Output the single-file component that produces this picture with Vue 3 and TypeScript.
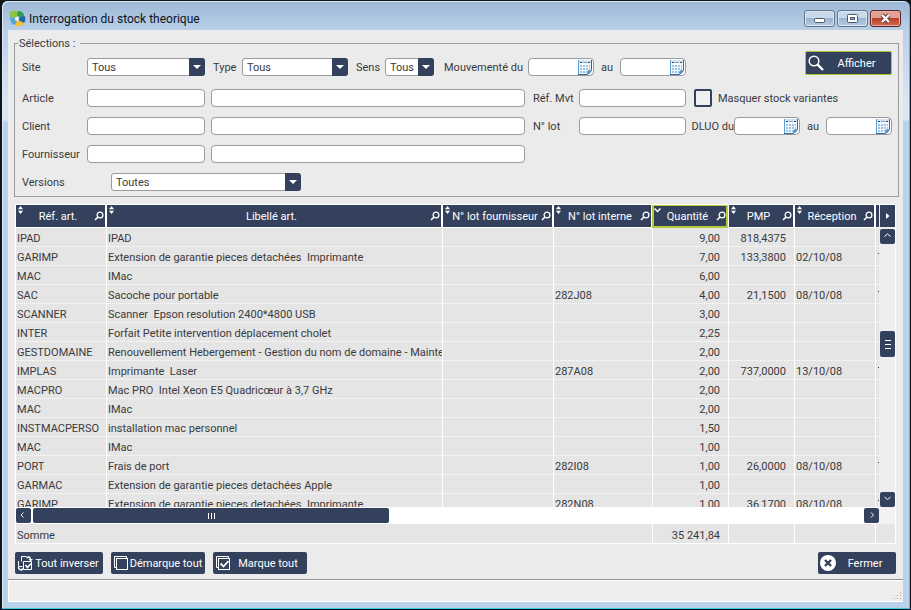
<script setup lang="ts">
import { ref } from 'vue'

interface Column {
  key: string
  label: string
  width: string
  sorted?: boolean
}

interface StockRow {
  ref: string
  label: string
  lot: string
  qty: string
  pmp: string
  date: string
}

const columns: Column[] = [
  { key: 'ref', label: 'Réf. art.', width: '91px' },
  { key: 'label', label: 'Libellé art.', width: 'auto' },
  { key: 'supplierLot', label: 'N° lot fournisseur', width: '111px' },
  { key: 'lot', label: 'N° lot interne', width: '99px' },
  { key: 'qty', label: 'Quantité', width: '76px', sorted: true },
  { key: 'pmp', label: 'PMP', width: '66px' },
  { key: 'date', label: 'Réception', width: '81px' },
]

const row = (ref: string, label: string, qty: string, lot = '', pmp = '', date = ''): StockRow => ({
  ref, label, lot, qty, pmp, date,
})

const rows: StockRow[] = [
  row('IPAD', 'IPAD', '9,00', '', '818,4375'),
  row('GARIMP', 'Extension de garantie pieces detachées  Imprimante', '7,00', '', '133,3800', '02/10/08'),
  row('MAC', 'IMac', '6,00'),
  row('SAC', 'Sacoche pour portable', '4,00', '282J08', '21,1500', '08/10/08'),
  row('SCANNER', 'Scanner  Epson resolution 2400*4800 USB', '3,00'),
  row('INTER', 'Forfait Petite intervention déplacement cholet', '2,25'),
  row('GESTDOMAINE', 'Renouvellement Hebergement - Gestion du nom de domaine - Mainten', '2,00'),
  row('IMPLAS', 'Imprimante  Laser', '2,00', '287A08', '737,0000', '13/10/08'),
  row('MACPRO', 'Mac PRO  Intel Xeon E5 Quadricœur à 3,7 GHz', '2,00'),
  row('MAC', 'IMac', '2,00'),
  row('INSTMACPERSO', 'installation mac personnel', '1,50'),
  row('MAC', 'IMac', '1,00'),
  row('PORT', 'Frais de port', '1,00', '282I08', '26,0000', '08/10/08'),
  row('GARMAC', 'Extension de garantie pieces detachées Apple', '1,00'),
  row('GARIMP', 'Extension de garantie pieces detachées  Imprimante', '1,00', '282N08', '36,1700', '08/10/08'),
]

const hideVariants = ref(false)
</script>

<template>
  <div class="window">
    <header class="titlebar">
      <svg class="app-icon" viewBox="0 0 17 17" aria-hidden="true">
        <path d="M1 2 Q5 0 9 1 L9 6 L5 8 L1 7 Q0 4 1 2Z" fill="#8cc63e" />
        <path d="M9 1 Q14 1 15 5 L15 8 L10 7 L8 5Z" fill="#2f9e58" />
        <path d="M11 7 L16 6 Q17 11 15 13 L10 13 L9 10Z" fill="#2467a8" />
        <path d="M9 10 L15 13 Q13 17 6 16 L6 12Z" fill="#f4c430" />
        <path d="M1 7 L6 8 L8 11 L6 15 Q1 14 1 7Z" fill="#5ba4d9" />
        <circle cx="8" cy="9" r="2" fill="#eef5fa" />
      </svg>
      <h1>Interrogation du stock theorique</h1>
      <div class="win-buttons">
        <button type="button" aria-label="Réduire">
          <svg viewBox="0 0 13 11"><rect x="1.500" y="5.500" width="10" height="4" rx="1" fill="#fff" stroke="#4b5868" /></svg>
        </button>
        <button type="button" aria-label="Agrandir">
          <svg viewBox="0 0 13 11"><rect x="1.500" y="1.500" width="10" height="8" rx="1" fill="#fff" stroke="#4b5868" /><rect x="4.500" y="4.500" width="4" height="2" fill="#9db8d3" stroke="#4b5868" /></svg>
        </button>
        <button type="button" class="close" aria-label="Fermer la fenêtre">
          <svg viewBox="0 0 13 11"><path d="M3 2l7 7M10 2l-7 7" stroke="#5a3a3c" stroke-width="4.200" /><path d="M3 2l7 7M10 2l-7 7" stroke="#fff" stroke-width="2.400" /></svg>
        </button>
      </div>
    </header>

    <main class="content">
      <fieldset class="selections">
        <legend>Sélections :</legend>
        <div class="top-line">
          <label class="field-label" for="site">Site</label>
          <span class="combo combo-site"><select id="site"><option>Tous</option></select></span>
          <label class="type-label" for="type">Type</label>
          <span class="combo combo-type"><select id="type"><option>Tous</option></select></span>
          <label class="sens-label" for="sens">Sens</label>
          <span class="combo combo-sens"><select id="sens"><option>Tous</option></select></span>
          <label class="moved-label" for="moved-from">Mouvementé du</label>
          <span class="date"><input id="moved-from" type="text" /><button type="button" aria-label="Calendrier"><svg viewBox="0 0 14 16"><use href="#calendar" /></svg></button></span>
          <label class="to" for="moved-to">au</label>
          <span class="date"><input id="moved-to" type="text" /><button type="button" aria-label="Calendrier"><svg viewBox="0 0 14 16"><use href="#calendar" /></svg></button></span>
          <button type="button" class="action show">
            <svg viewBox="0 0 16 16"><circle cx="6" cy="6" r="4.800" fill="none" stroke="#fff" stroke-width="1.500" /><path d="M9.500 9.500L15 15" stroke="#fff" stroke-width="2.400" /></svg>
            <span>Afficher</span>
          </button>
        </div>

        <div class="criteria">
          <label for="article">Article</label>
          <input id="article" type="text" />
          <input type="text" aria-label="Libellé article" />
          <label class="mid" for="mvt">Réf. Mvt</label>
          <input id="mvt" type="text" />
          <div class="check">
            <input id="hide-variants" v-model="hideVariants" type="checkbox" />
            <label for="hide-variants">Masquer stock variantes</label>
          </div>

          <label for="client">Client</label>
          <input id="client" type="text" />
          <input type="text" aria-label="Nom du client" />
          <label class="mid" for="lot">N° lot</label>
          <input id="lot" type="text" />
          <div class="dluo">
            <label for="dluo-from">DLUO du</label>
            <span class="date"><input id="dluo-from" type="text" /><button type="button" aria-label="Calendrier"><svg viewBox="0 0 14 16"><use href="#calendar" /></svg></button></span>
            <label class="to" for="dluo-to">au</label>
            <span class="date"><input id="dluo-to" type="text" /><button type="button" aria-label="Calendrier"><svg viewBox="0 0 14 16"><use href="#calendar" /></svg></button></span>
          </div>

          <label for="supplier">Fournisseur</label>
          <input id="supplier" type="text" />
          <input type="text" aria-label="Nom du fournisseur" />

          <label class="versions-label" for="versions">Versions</label>
          <span class="combo combo-versions"><select id="versions"><option>Toutes</option></select></span>
        </div>
      </fieldset>

      <section class="grid">
        <div class="grid-view">
          <div class="grid-clip">
            <table>
              <colgroup>
                <col v-for="c in columns" :key="c.key" :style="{ width: c.width }" />
                <col class="sliver" />
              </colgroup>
              <thead>
                <tr>
                  <th v-for="c in columns" :key="c.key" :class="{ sorted: c.sorted }">
                    <button type="button" class="head">
                      <svg v-if="c.sorted" class="sort" viewBox="0 0 7 8"><path d="M0.500 2.500l3 3 3-3" fill="none" stroke="#fff" stroke-width="1.500" /></svg>
                      <svg v-else class="sort" viewBox="0 0 7 8"><path d="M1 3.200L3.500 0 6 3.200zM1 4.800L3.500 8 6 4.800z" fill="#fff" /></svg>
                      <span>{{ c.label }}</span>
                      <svg class="loupe" viewBox="0 0 10 10"><circle cx="6" cy="4" r="2.900" fill="none" stroke="#fff" stroke-width="1.300" /><path d="M4 6L1 9" stroke="#fff" stroke-width="1.600" /></svg>
                    </button>
                  </th>
                  <th class="cut"></th>
                </tr>
              </thead>
              <tbody>
                <tr v-for="(r, i) in rows" :key="i">
                  <td>{{ r.ref }}</td>
                  <td>{{ r.label }}</td>
                  <td></td>
                  <td>{{ r.lot }}</td>
                  <td class="num">{{ r.qty }}</td>
                  <td class="num">{{ r.pmp }}</td>
                  <td>{{ r.date }}</td>
                  <td class="cut" :class="{ more: r.date }"></td>
                </tr>
              </tbody>
            </table>
          </div>
          <div class="side">
            <button type="button" class="next-col" aria-label="Colonnes suivantes"><svg viewBox="0 0 15 22"><path d="M6 8v6l3.500-3z" fill="#fff" /></svg></button>
            <button type="button" class="sb" aria-label="Haut"><svg viewBox="0 0 15 15"><path d="M4.500 7.500l3-2.500 3 2.500" /></svg></button>
            <div class="v-track">
              <div class="v-thumb"><i></i><i></i><i></i></div>
            </div>
            <button type="button" class="sb" aria-label="Bas"><svg viewBox="0 0 15 15"><path d="M4.500 5l3 2.500 3-2.500" /></svg></button>
          </div>
        </div>

        <div class="h-scroll">
          <div class="h-track">
            <button type="button" class="sb" aria-label="Gauche"><svg viewBox="0 0 15 15"><path d="M7.500 4.500l-2.500 2.500 2.500 2.500" /></svg></button>
            <div class="h-lane"><div class="h-thumb"><i></i><i></i><i></i></div></div>
            <button type="button" class="sb" aria-label="Droite"><svg viewBox="0 0 15 15"><path d="M7 4.500l2.500 2.500-2.500 2.500" /></svg></button>
          </div>
        </div>

        <table class="totals">
          <colgroup>
            <col v-for="c in columns" :key="c.key" :style="{ width: c.width }" />
            <col class="rest" />
          </colgroup>
          <tbody>
            <tr>
              <td colspan="4">Somme</td>
              <td class="num">35 241,84</td>
              <td></td>
              <td></td>
              <td></td>
            </tr>
          </tbody>
        </table>
      </section>

      <div class="actions">
        <button type="button" class="action invert">
          <svg viewBox="0 0 16 16" fill="none" stroke="#fff"><path d="M4.500 6.500v-5h5M1.500 6v5.500h4M6.500 6.500h8v8h-8z" /><path d="M8.500 10l2 2.500 3.500-4" stroke-width="1.600" /><path d="M9.500 3c2.500-2 4-1 4 2M1.500 12c0 2.500 1.500 3 3.500 3" stroke-width="1.400" /><path d="M11.500 4h4.500l-2.500 2.500zM4.500 12.500v3.500l2-1.500z" fill="#fff" stroke="none" /></svg>
          <span>Tout inverser</span>
        </button>
        <button type="button" class="action wide">
          <svg viewBox="0 0 16 16" fill="none" stroke="#fff"><path d="M1.500 12.500v-11h12M1.500 12.500h2M13.500 1.500v2" /><rect x="3.500" y="3.500" width="11" height="11" /></svg>
          <span>Démarque tout</span>
        </button>
        <button type="button" class="action wide">
          <svg viewBox="0 0 16 16" fill="none" stroke="#fff"><path d="M1.500 12.500v-11h12M1.500 12.500h2M13.500 1.500v2" /><rect x="3.500" y="3.500" width="11" height="11" /><path d="M5.500 8.500l3 3 5-5.500" stroke-width="1.800" /></svg>
          <span>Marque tout</span>
        </button>
        <button type="button" class="action exit">
          <svg viewBox="0 0 16 16"><circle cx="8" cy="8" r="8" fill="#fff" /><path d="M5 5l6 6M11 5l-6 6" stroke="#33415c" stroke-width="2.400" /></svg>
          <span>Fermer</span>
        </button>
      </div>

      <footer class="status">
        <svg viewBox="0 0 8 8" fill="#a9a9a9"><path d="M6 0h1v1h-1zM3 3h1v1h-1zM6 3h1v1h-1zM0 6h1v1h-1zM3 6h1v1h-1zM6 6h1v1h-1z" /></svg>
      </footer>
    </main>

    <svg class="defs" aria-hidden="true">
      <symbol id="calendar" viewBox="0 0 14 16">
        <path d="M0 1h14v10q0 4-5 5h-9z" fill="#f4f9fd" />
        <path d="M0 1h14v3h-14z" fill="#d3e3f1" />
        <path d="M0.500 1v14.500" stroke="#5f9fd4" fill="none" />
        <path d="M2 3h2v1h-2zM10 3h2v1h-2z" fill="#27415e" />
        <path d="M5 3h4v1h-4z" fill="#86a5c2" />
        <path d="M2 6h2v2h-2zM5 6h2v2h-2zM8 6h2v2h-2zM11 6h1v2h-1zM2 9h2v2h-2zM5 9h2v2h-2zM8 9h2v2h-2zM11 9h1v2h-1zM2 12h2v2h-2zM5 12h2v2h-2zM8 12h1v2h-1z" fill="#9cc4e6" />
        <path d="M13.500 1v10q-1 3.500-4.500 4.500h-9" stroke="#2f6ba3" fill="none" />
        <path d="M13 11q-3 0-3.500 1t-.5 3q3-1 4-4z" fill="#5b8fbf" />
      </symbol>
    </svg>
  </div>
</template>

<style>
body {
  background: #10161d;
}
</style>

<style scoped>
.window {
  --navy: #33415c;
  --line: #9a9a9f;
  box-sizing: border-box;
  display: flex;
  flex-direction: column;
  height: 100vh;
  min-height: 400px;
  padding: 0 7px 7px 6px;
  border: 1px solid #10161d;
  border-left-width: 2px;
  border-radius: 7px 7px 0 0;
  background: linear-gradient(#9db8d6, #bad0e9 30px, #d8e6f7 100px, #d8e6f7 119px, #b9d1e9 121px);
  box-shadow: inset -1px -1px #3fc4e0, inset 1px 1px #dfeaf5;
  font-family: Roboto, "Noto Sans", sans-serif;
  font-size: 11px;
  line-height: 14px;
  color: #3a3a3c;
}
.window * {
  box-sizing: border-box;
}
button,
input,
select {
  margin: 0;
  padding: 0;
  border: 0;
  font: inherit;
  color: inherit;
}
svg {
  display: block;
}
label {
  padding-top: 2px;
  white-space: nowrap;
}
.defs {
  position: absolute;
  width: 0;
  height: 0;
}

.titlebar {
  display: flex;
  align-items: center;
  height: 29px;
  padding: 6px 2px 0 0;
  flex: none;
}
.app-icon {
  width: 17px;
  height: 17px;
  margin: 0 3px 0 1px;
}
h1 {
  flex: 1;
  margin: 0;
  font-size: 12px;
  font-weight: normal;
  line-height: 16px;
  color: #0c1420;
}
.win-buttons {
  display: flex;
  gap: 2px;
}
.win-buttons button {
  display: grid;
  place-items: center;
  width: 31px;
  height: 17px;
  border: 1px solid #62758c;
  border-radius: 3px;
  background: linear-gradient(#c6d8ea 45%, #9bb5d0 50%, #b5cce3);
  box-shadow: inset 0 0 0 1px #dbe8f4;
}
.win-buttons svg {
  width: 13px;
  height: 11px;
}
.win-buttons .close {
  border-color: #5d2225;
  background: linear-gradient(#dfa194 45%, #bd3f2b 50%, #cf6a4f);
  box-shadow: inset 0 0 0 1px #e5b0a5;
}

.content {
  display: flex;
  flex: 1;
  flex-direction: column;
  min-height: 0;
  background: #ebebeb;
}

.selections {
  flex: none;
  min-width: 0;
  margin: 6px 4px 0 6px;
  padding: 1px 6px 5px 7px;
  border: 1px solid var(--line);
}
legend {
  height: 14px;
  margin-left: -4px;
  padding: 1px 5px 0 1px;
}
.top-line {
  display: flex;
  align-items: flex-end;
  height: 25px;
  margin-bottom: 13px;
}
.top-line label {
  flex: none;
  padding-top: 0;
  line-height: 16px;
}
.field-label {
  width: 65px;
}
.top-line .type-label,
.top-line .sens-label {
  width: 37px;
  padding-left: 8px;
}
.top-line .moved-label {
  width: 94px;
  padding-left: 10px;
}
input[type='text'],
select {
  height: 18px;
  border: 1px solid var(--line);
  border-radius: 4px;
  background: #fff;
}
input[type='text'] {
  width: 100%;
  min-width: 0;
  padding: 0 4px;
}
.combo {
  position: relative;
  display: block;
}
.combo select {
  display: block;
  width: 100%;
  padding: 1px 16px 0 4px;
  appearance: none;
  border-radius: 3px;
  line-height: 15px;
}
.combo::before {
  content: '';
  position: absolute;
  top: 0;
  right: 0;
  width: 16px;
  height: 18px;
  border-radius: 0 3px 3px 0;
  background: var(--navy);
  pointer-events: none;
}
.combo::after {
  content: '';
  position: absolute;
  top: 7px;
  right: 4px;
  border: 4px solid transparent;
  border-top-color: #fff;
  border-bottom: 0;
  pointer-events: none;
}
.combo-site {
  width: 118px;
}
.combo-type {
  width: 106px;
}
.combo-sens {
  width: 49px;
}
.date {
  position: relative;
  flex: none;
  width: 66px;
}
.date input {
  display: block;
}
.date button {
  position: absolute;
  top: 1px;
  right: 2px;
  width: 14px;
  height: 16px;
  background: none;
}
.date svg {
  width: 14px;
  height: 16px;
}
.to {
  flex: none;
  width: 26px;
  text-align: center;
}
.action {
  display: flex;
  flex: none;
  align-items: center;
  height: 22px;
  padding: 0 2px;
  border-radius: 2px;
  background: var(--navy);
  color: #fff;
}
.action svg {
  flex: none;
  width: 16px;
  height: 16px;
}
.action span {
  flex: 1;
  padding-top: 1px;
  text-align: center;
  white-space: nowrap;
}
.show {
  align-self: flex-start;
  width: 87px;
  height: 24px;
  margin-left: auto;
  border: 1px solid #a8c62e;
}
.criteria {
  display: grid;
  grid-template-columns: 59px 118px minmax(80px, 1fr) 42px 107px 200px;
  grid-auto-rows: 18px;
  gap: 10px 6px;
  align-items: center;
}
.mid {
  padding-left: 2px;
}
.check {
  display: flex;
  align-items: center;
  gap: 6px;
  padding-left: 2px;
}
.check input {
  width: 18px;
  height: 18px;
  appearance: none;
  border: 2px solid var(--navy);
  border-radius: 2px;
  background: #efefef;
}
.check input:checked {
  box-shadow: inset 0 0 0 3px #efefef;
  background: var(--navy);
}
.dluo {
  display: flex;
  align-items: center;
  justify-content: flex-end;
}
.versions-label {
  grid-column: 1;
}
.combo-versions {
  grid-column: 2 / 4;
  width: 190px;
  margin-left: 24px;
}

.grid {
  display: flex;
  flex: 1;
  flex-direction: column;
  min-height: 0;
  margin: 7px 7px 0;
  border: 1px solid #fff;
}
.grid-view {
  display: flex;
  flex: 1;
  min-height: 0;
}
.grid-clip {
  flex: 1;
  min-width: 0;
  overflow: hidden;
}
table {
  width: 100%;
  table-layout: fixed;
  border-spacing: 0;
}
.sliver {
  width: 3px;
}
.rest {
  width: 19px;
}
th,
td {
  padding: 0;
  font-weight: normal;
  text-align: left;
}
th {
  height: 23px;
  border-right: 2px solid #fff;
  border-bottom: 1px solid #fff;
  background: var(--navy);
}
.head {
  position: relative;
  display: flex;
  align-items: center;
  width: 100%;
  height: 22px;
  padding-right: 1px;
  padding-left: 6px;
  background: var(--navy);
  color: #fff;
  white-space: nowrap;
}
.head span {
  flex: 1;
  padding-top: 2px;
}
.sorted .head {
  outline: 2px solid #b5cc3a;
  outline-offset: -1px;
}
.sort {
  position: absolute;
  top: 1px;
  left: 1px;
  width: 7px;
  height: 8px;
}
.loupe {
  flex: none;
  width: 10px;
  height: 10px;
}
td {
  height: 19px;
  padding: 4px 2px 0 1px;
  overflow: hidden;
  border-right: 1px solid #fff;
  border-bottom: 1px dotted #fff;
  background: #e5e5e5;
  line-height: 14px;
  white-space: pre;
}
td.num {
  padding-right: 8px;
  text-align: right;
}
th.cut,
td.cut {
  border-right: 0;
  padding: 0;
}
.more::before {
  content: '';
  display: block;
  width: 1px;
  height: 1px;
  margin: -3px 0 0 2px;
  background: #3a3a3c;
}

.side {
  display: flex;
  flex: none;
  flex-direction: column;
  width: 16px;
  padding-left: 1px;
  background: #eee;
}
.next-col {
  height: 22px;
  margin-bottom: 2px;
  background: var(--navy);
}
.next-col svg {
  width: 15px;
  height: 22px;
}
.sb {
  flex: none;
  width: 15px;
  height: 15px;
  border-radius: 2px;
  background: var(--navy);
}
.sb svg {
  width: 15px;
  height: 15px;
  fill: none;
  stroke: #fff;
}
.v-track {
  display: flex;
  flex: 1;
  align-items: flex-start;
  padding-top: 87px;
}
.v-thumb {
  display: flex;
  flex: 1;
  flex-direction: column;
  align-items: center;
  justify-content: center;
  gap: 3px;
  height: 26px;
  border-radius: 2px;
  background: var(--navy);
}
.v-thumb i {
  width: 6px;
  height: 1px;
  background: #fff;
}
.h-scroll {
  flex: none;
  padding-right: 16px;
  background: #f2f2f2;
}
.h-track {
  display: flex;
  gap: 2px;
  height: 17px;
  padding: 1px 0;
  background: #fff;
}
.h-lane {
  flex: 1;
}
.h-thumb {
  display: flex;
  align-items: center;
  justify-content: center;
  gap: 2px;
  width: 43%;
  height: 15px;
  border-radius: 2px;
  background: var(--navy);
}
.h-thumb i {
  width: 1px;
  height: 6px;
  background: #fff;
}
.totals {
  flex: none;
}
.totals td {
  border-bottom: 0;
}
.totals td:last-child {
  border-right: 0;
}

.actions {
  display: flex;
  flex: none;
  gap: 8px;
  padding: 8px 7px 5px;
}
.invert {
  width: 88px;
}
.wide {
  width: 94px;
}
.exit {
  width: 78px;
  margin-left: auto;
}
.status {
  display: flex;
  flex: none;
  align-items: flex-end;
  justify-content: flex-end;
  height: 23px;
  padding: 0 1px 1px;
  border-top: 1px solid #8f8f8f;
  border-bottom: 1px solid #fff;
  background: #f0eeed;
  box-shadow: inset 1px 1px #fff;
}
.status svg {
  width: 8px;
  height: 8px;
}
</style>
